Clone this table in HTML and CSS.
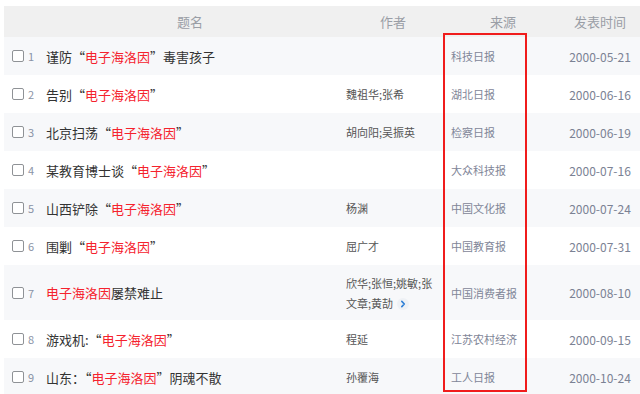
FILE: index.html
```html
<!DOCTYPE html>
<html lang="zh">
<head>
<meta charset="utf-8">
<link rel="stylesheet" href="styles.css">
</head>
<body>
<div class="page">
  <div class="table">
    <div class="row head">
      <div class="c1"></div>
      <div class="c2">题名</div>
      <div class="c3">作者</div>
      <div class="c4">来源</div>
      <div class="c5">发表时间</div>
    </div>
    <div class="row odd">
      <div class="c1"><span class="cb"></span><span class="num">1</span></div>
      <div class="c2 title">谨防“<span class="red">电子海洛因</span>”毒害孩子</div>
      <div class="c3 author"></div>
      <div class="c4 src">科技日报</div>
      <div class="c5 date">2000-05-21</div>
    </div>
    <div class="row">
      <div class="c1"><span class="cb"></span><span class="num">2</span></div>
      <div class="c2 title">告别“<span class="red">电子海洛因</span>”</div>
      <div class="c3 author">魏祖华;张希</div>
      <div class="c4 src">湖北日报</div>
      <div class="c5 date">2000-06-16</div>
    </div>
    <div class="row odd">
      <div class="c1"><span class="cb"></span><span class="num">3</span></div>
      <div class="c2 title">北京扫荡“<span class="red">电子海洛因</span>”</div>
      <div class="c3 author">胡向阳;吴振英</div>
      <div class="c4 src">检察日报</div>
      <div class="c5 date">2000-06-19</div>
    </div>
    <div class="row">
      <div class="c1"><span class="cb"></span><span class="num">4</span></div>
      <div class="c2 title">某教育博士谈“<span class="red">电子海洛因</span>”</div>
      <div class="c3 author"></div>
      <div class="c4 src">大众科技报</div>
      <div class="c5 date">2000-07-16</div>
    </div>
    <div class="row odd">
      <div class="c1"><span class="cb"></span><span class="num">5</span></div>
      <div class="c2 title">山西铲除“<span class="red">电子海洛因</span>”</div>
      <div class="c3 author">杨渊</div>
      <div class="c4 src">中国文化报</div>
      <div class="c5 date">2000-07-24</div>
    </div>
    <div class="row">
      <div class="c1"><span class="cb"></span><span class="num">6</span></div>
      <div class="c2 title">围剿“<span class="red">电子海洛因</span>”</div>
      <div class="c3 author">屈广才</div>
      <div class="c4 src">中国教育报</div>
      <div class="c5 date">2000-07-31</div>
    </div>
    <div class="row odd tall">
      <div class="c1"><span class="cb"></span><span class="num">7</span></div>
      <div class="c2 title"><span class="red">电子海洛因</span>屡禁难止</div>
      <div class="c3 author">欣华;张恒;姚敏;张文章;黄劼<span class="more"><svg width="12" height="12" viewBox="0 0 12 12"><circle cx="6" cy="6" r="6" fill="#eef1f5"/><path d="M4.8 3.4 L7.3 6 L4.8 8.6" fill="none" stroke="#2f7fd6" stroke-width="1.6" stroke-linecap="round" stroke-linejoin="round"/></svg></span></div>
      <div class="c4 src">中国消费者报</div>
      <div class="c5 date">2000-08-10</div>
    </div>
    <div class="row">
      <div class="c1"><span class="cb"></span><span class="num">8</span></div>
      <div class="c2 title">游戏机:“<span class="red">电子海洛因</span>”</div>
      <div class="c3 author">程延</div>
      <div class="c4 src">江苏农村经济</div>
      <div class="c5 date">2000-09-15</div>
    </div>
    <div class="row odd">
      <div class="c1"><span class="cb"></span><span class="num">9</span></div>
      <div class="c2 title">山东：“<span class="red">电子海洛因</span>”阴魂不散</div>
      <div class="c3 author">孙覆海</div>
      <div class="c4 src">工人日报</div>
      <div class="c5 date">2000-10-24</div>
    </div>
  </div>
  <div class="mark"></div>
</div>
</body>
</html>
```

FILE: styles.css
```css
html, body {
  margin: 0;
  padding: 0;
  background: #fff;
  overflow: hidden;
}
.page {
  position: relative;
  width: 640px;
  height: 394px;
  padding: 6px 0 0 4px;
  box-sizing: border-box;
  font-family: "Noto Sans CJK SC", "Noto Sans", sans-serif;
}
.table {
  width: 636px;
}
.row {
  display: grid;
  grid-template-columns: 36px 300px 106px 114px 80px;
  height: 38px;
  align-items: center;
  background: #fff;
}
.row.odd {
  background: #f7f8fa;
}
.row.tall {
  height: 55px;
}
.row.head {
  height: 31px;
  background: #f0f0f0;
  color: #9a9ea6;
  font-size: 13px;
}
.head .c2, .head .c3, .head .c4, .head .c5 {
  text-align: center;
}
.c1 {
  display: flex;
  align-items: center;
  padding-left: 8px;
}
.cb {
  width: 10px;
  height: 10px;
  border: 1px solid #8f9296;
  border-radius: 2px;
  background: #fff;
  margin-right: 4px;
}
.num {
  font-size: 11px;
  color: #8a93a6;
}
.title {
  padding-left: 6px;
  font-size: 13px;
  color: #333;
  white-space: nowrap;
}
.red {
  color: #f5222d;
}
.author {
  padding: 0 10px 0 6px;
  font-size: 11px;
  line-height: 20px;
  color: #555;
}
.more {
  display: inline-block;
  vertical-align: -2px;
  margin-left: 4px;
}
.more svg {
  display: block;
}
.src {
  padding-left: 5px;
  font-size: 11px;
  color: #7f8698;
}
.date {
  text-align: center;
  font-size: 12px;
  color: #7b8294;
}
.mark {
  position: absolute;
  left: 443px;
  top: 33px;
  width: 80px;
  height: 355px;
  border: 2px solid #f01c1c;
}
```
